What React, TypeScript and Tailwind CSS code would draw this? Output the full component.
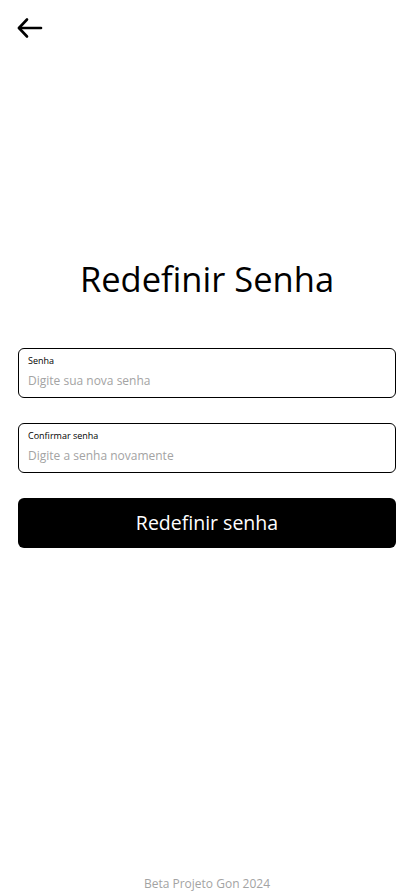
export default function App() {
  return (
    <div className="min-h-screen w-full bg-white flex flex-col" style={{ fontFamily: '"Open Sans", "Noto Sans", sans-serif' }}>
      <header className="px-[16px] pt-[16px] h-[60px]">
        <button className="block">
          <svg width="28" height="24" viewBox="0 0 28 24" fill="none" stroke="black" strokeWidth="2.6" strokeLinecap="round" strokeLinejoin="round">
            <path d="M3 12h22" />
            <path d="M11 3.5 3 12l8 8.5" />
          </svg>
        </button>
      </header>

      <main className="flex-1 flex flex-col px-[18px]">
        <h1 className="text-center text-[34.5px] text-black mt-[195px] leading-[48px]">Redefinir Senha</h1>

        <div className="mt-[45px] flex flex-col gap-[25px]">
          <label className="block border border-black rounded-[6px] h-[50px] px-[9px] pt-[6px]">
            <span className="block text-[9px] leading-[12px] text-black">Senha</span>
            <input type="password" placeholder="Digite sua nova senha" className="w-full text-[12px] leading-[18px] mt-[3px] outline-none placeholder:text-[#a3a3a3]" />
          </label>
          <label className="block border border-black rounded-[6px] h-[50px] px-[9px] pt-[6px]">
            <span className="block text-[9px] leading-[12px] text-black">Confirmar senha</span>
            <input type="password" placeholder="Digite a senha novamente" className="w-full text-[12px] leading-[18px] mt-[3px] outline-none placeholder:text-[#a3a3a3]" />
          </label>
          <button className="h-[50px] w-full bg-black text-white rounded-[6px] text-[19.5px]">Redefinir senha</button>
        </div>
      </main>

      <footer className="text-center text-[12px] text-[#a3a3a3] pb-[3px] leading-[18px]">Beta Projeto Gon 2024</footer>
    </div>
  );
}
